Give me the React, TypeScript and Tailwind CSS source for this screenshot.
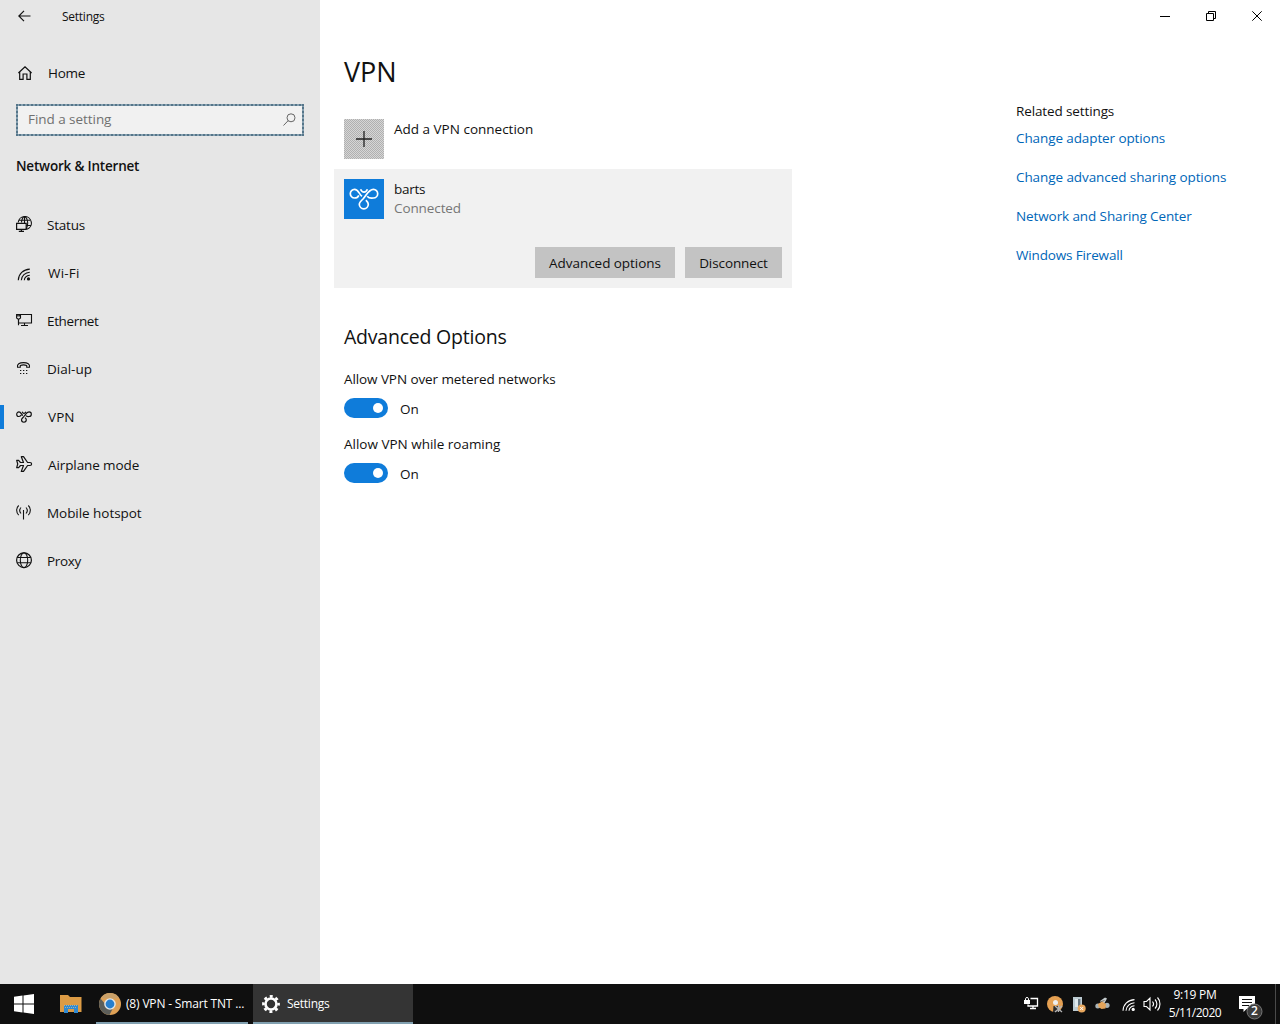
import React from "react";

type IconProps = { children: React.ReactNode; w?: number; h?: number; className?: string };

function Icon({ children, w = 18, h = 18, className = "" }: IconProps) {
  return (
    <svg
      width={w}
      height={h}
      viewBox={`0 0 ${w} ${h}`}
      fill="none"
      stroke="currentColor"
      strokeWidth="1"
      className={`block shrink-0 ${className}`}
    >
      {children}
    </svg>
  );
}

const StatusIcon = () => (
  <Icon>
    <path d="M2.200 6.500A6.600 6.600 0 1 1 11 13.300M3.200 4.300h10.800M10.300 9.500h4.500M5.500 6.500C5.500 3.500 7 .7 8.500 .7s3.200 2.700 3.200 6.200c0 2.300-.4 4.300-1.500 6.200M8.500 .7v6.500" strokeWidth="1.100" />
    <path d="M.6 7.300h9.600v6H.6zM5.400 13v2.400M2.800 15.400h5.200" strokeWidth="1.200" />
  </Icon>
);

const WifiArcs = () => (
  <>
    <path d="M1 12.700C1.200 6.500 6 1.900 12.500 1.600M4 12.700C4.200 8.300 8 5 12.500 4.700M7 12.800c.2-2.800 2.500-4.800 5.500-5.100" strokeWidth="1.100" />
    <circle cx="11.200" cy="11.400" r="1.600" fill="currentColor" stroke="none" />
  </>
);

const WifiIcon = () => (
  <Icon>
    <g transform="translate(1.300 3.500)">
      <WifiArcs />
    </g>
  </Icon>
);

const EthernetIcon = () => (
  <Icon>
    <path d="M4.500 2.500h11v8.500H2.500V7.500M5 13.500h7M8.500 11v2.500" strokeWidth="1.100" />
    <path d="M.6 2.500h3.900v3.500L3.300 7H1.800L.6 6zM1.900 2.500v2M3.300 2.500v2M2.500 7v6.300" strokeWidth="1.100" />
  </Icon>
);

const DialIcon = () => (
  <Icon>
    <path d="M1.500 7.200c-.7-3 2-4.600 6-4.600s6.700 1.600 6 4.600h-2.800V5.500C9 4.800 6 4.800 4.300 5.500v1.700z" strokeWidth="1.100" />
    <path d="M4 10.500h1.300M7 10.500h1.300M10 10.500h1.300M4 13.500h1.300M7 13.500h1.300M10 13.500h1.300" strokeWidth="1.200" />
  </Icon>
);

/* Two side loops and a lower loop joined by crossing strands. */
function VpnLoops({ width, height, sw }: { width: number; height: number; sw: number }) {
  return (
    <svg width={width} height={height} viewBox="0 0 30 22" fill="none" stroke="currentColor" strokeWidth={sw} className="block shrink-0">
      <path d="M9.800 7.300C9 9 7.300 10 5.600 10A4.300 4.300 0 1 1 5.600 1.400C9.300 1.400 10.200 6.400 13 8.300" />
      <path d="M11.600 1.200C12.500 3.500 14 4.100 15 4.100s2.500-.6 3.400-2.900" />
      <path d="M18.200 8.200C20 10.500 22.500 10.300 24.400 10a4.300 4.300 0 1 0 0-8.600C19.500 1.400 17.400 7.500 14 11c-3 2.800-3.700 4-3.700 5.300a4.500 4.500 0 0 0 9 0c0-1.700-1-2.900-2.400-4.200" />
    </svg>
  );
}

const PlaneIcon = () => (
  <Icon>
    <path d="M.7 4.300h1.900l1.900 2.200h3L5.300 .7h2.200l4.100 5.800h2.400c2.100 0 2.100 3 0 3h-2.400L7.500 15.400H5.300l2.200-5.900h-3l-1.900 2.200H.7l1-3.700z" strokeWidth="1.200" strokeLinejoin="round" />
  </Icon>
);

const HotspotIcon = () => (
  <Icon>
    <path d="M7.500 6v9.500M5 3.500c-1.500 1.700-1.500 4.300 0 6M10 3.500c1.500 1.700 1.500 4.300 0 6M2.700 1.500C0 4 0 8.700 2.700 11.200M12.300 1.500c2.700 2.500 2.700 7.200 0 9.700" strokeWidth="1.100" />
  </Icon>
);

const GlobeIcon = () => (
  <Icon>
    <circle cx="8" cy="8.200" r="7.400" strokeWidth="1.200" />
    <ellipse cx="8" cy="8.200" rx="3.700" ry="7.400" strokeWidth="1.100" />
    <path d="M1.200 5.500h13.600M1.200 10.800h13.600" strokeWidth="1.100" />
  </Icon>
);

const NAV = [
  { label: "Status", icon: <StatusIcon />, cls: "tracking-[-0.2px]" },
  { label: "Wi-Fi", icon: <WifiIcon />, cls: "ml-px tracking-[0.2px]" },
  { label: "Ethernet", icon: <EthernetIcon />, cls: "tracking-[-0.35px]" },
  { label: "Dial-up", icon: <DialIcon />, cls: "" },
  { label: "VPN", icon: <VpnLoops width={16} height={12} sw={2.2} />, cls: "ml-px tracking-[0.1px]", active: true },
  { label: "Airplane mode", icon: <PlaneIcon />, cls: "ml-px tracking-[-0.1px]" },
  { label: "Mobile hotspot", icon: <HotspotIcon />, cls: "tracking-[-0.05px]" },
  { label: "Proxy", icon: <GlobeIcon />, cls: "tracking-[-0.35px]" },
];

const LINKS = [
  { label: "Change adapter options", cls: "tracking-[-0.1px]" },
  { label: "Change advanced sharing options", cls: "tracking-[-0.08px]" },
  { label: "Network and Sharing Center", cls: "tracking-[-0.1px]" },
  { label: "Windows Firewall", cls: "tracking-[-0.15px]" },
];

function Sidebar() {
  return (
    <aside className="flex w-80 shrink-0 flex-col bg-[#e6e6e6]">
      <div className="flex h-8 items-center pl-[18px]">
        <Icon w={13} h={12}>
          <path d="M.8 6H12.500M6 .8L.8 6 6 11.200" strokeWidth="1.200" />
        </Icon>
        <span className="ml-[31px] pt-[2px] text-[12px] leading-4 tracking-[-0.25px]">Settings</span>
      </div>
      <div className="mt-[17px] flex h-12 items-center pl-[18px]">
        <Icon w={14} h={14}>
          <path d="M.4 7L7 .8 13.600 7M1.700 6v7.300h3.400V8h3.800v5.300h3.400V6" strokeWidth="1.200" />
        </Icon>
        <span className="ml-4 tracking-[-0.25px]">Home</span>
      </div>
      <div className="mx-4 mt-[7px] flex h-8 border-2 border-dotted border-[#557589] bg-[#86a0b0]">
        <div className="flex flex-1 items-center justify-between bg-[#f1f1f1] pr-[6px] pl-[10px]">
          <span className="pb-[2px] tracking-[-0.05px] text-[#707070]">Find a setting</span>
          <Icon w={13} h={13} className="mb-px text-[#666]">
            <circle cx="8" cy="4.800" r="4" />
            <path d="M5.200 7.600L.5 12.500" />
          </Icon>
        </div>
      </div>
      <div className="mt-5 pl-4 leading-5 font-semibold tracking-[-0.2px]">Network &amp; Internet</div>
      <nav className="mt-[25px] flex flex-col">
        {NAV.map((n) => (
          <div key={n.label} className="flex h-12 items-center">
            <div className={`h-6 w-1 ${n.active ? "bg-[#0f7cda]" : ""}`} />
            <div className="ml-3 w-[31px]">{n.icon}</div>
            <span className={n.cls}>{n.label}</span>
          </div>
        ))}
      </nav>
    </aside>
  );
}

function Toggle({ label, cls }: { label: string; cls: string }) {
  return (
    <div className="flex h-[65px] flex-col">
      <span className={`leading-5 ${cls}`}>{label}</span>
      <div className="mt-[9px] flex h-5 items-center">
        <div className="flex h-5 w-11 items-center justify-end rounded-full bg-[#0f7cda] pr-[5px]">
          <div className="size-[10px] rounded-full bg-white" />
        </div>
        <span className="ml-3 pt-[2px]">On</span>
      </div>
    </div>
  );
}

function Content() {
  return (
    <main className="w-[472px] pt-5">
      <h1 className="pl-[10px] text-[27px] leading-10 font-normal">VPN</h1>
      <div className="mt-[27px] flex h-[50px] pl-[10px]">
        <div className="flex size-10 items-center justify-center bg-[repeating-conic-gradient(#b0b0b0_0_25%,#d6d6d6_0_50%)] bg-[length:2px_2px]">
          <Icon w={16} h={16} className="text-[#222]">
            <path d="M8 0v16M0 8h16" strokeWidth="1.300" />
          </Icon>
        </div>
        <span className="ml-[10px] leading-5">Add a VPN connection</span>
      </div>
      <section className="flex h-[119px] w-[458px] flex-col bg-[#f1f1f1] p-[10px]">
        <div className="flex">
          <div className="flex size-10 items-center justify-center bg-[#0f7cda] text-white">
            <VpnLoops width={30} height={22} sw={1.7} />
          </div>
          <div className="ml-[10px] flex flex-col">
            <span className="leading-5 tracking-[-0.25px]">barts</span>
            <span className="leading-[19px] tracking-[-0.1px] text-[#767676]">Connected</span>
          </div>
        </div>
        <div className="mt-7 flex justify-end gap-[10px]">
          <button className="h-[31px] w-[140px] bg-[#c3c3c3] tracking-[-0.05px]">Advanced options</button>
          <button className="h-[31px] w-[97px] bg-[#c3c3c3] tracking-[-0.1px]">Disconnect</button>
        </div>
      </section>
      <div className="pl-[10px]">
        <h2 className="mt-[35px] text-[19.500px] leading-7 font-normal tracking-[-0.22px]">Advanced Options</h2>
        <div className="mt-[18px]">
          <Toggle label="Allow VPN over metered networks" cls="tracking-[-0.09px]" />
          <Toggle label="Allow VPN while roaming" cls="tracking-[-0.01px]" />
        </div>
      </div>
    </main>
  );
}

function CaptionButtons() {
  return (
    <div className="flex h-8 items-center justify-end text-black">
      <div className="flex w-[46px] justify-center">
        <Icon w={10} h={10}>
          <path d="M0 5.500h10" />
        </Icon>
      </div>
      <div className="flex w-[46px] justify-center">
        <Icon w={10} h={10}>
          <path d="M.5 2.500h7v7h-7zM2.500 2.500v-2h7v7h-2" />
        </Icon>
      </div>
      <div className="flex w-[46px] justify-center">
        <Icon w={10} h={10}>
          <path d="M.3 .3l9.400 9.400M9.700 .3l-9.400 9.400" />
        </Icon>
      </div>
    </div>
  );
}

function Taskbar() {
  return (
    <footer className="flex h-10 items-stretch bg-[#0f0f0f] text-[12px] text-white">
      <div className="flex w-12 items-center justify-center">
        <svg width="20" height="20" viewBox="0 0 20 20" fill="#fff">
          <path d="M0 2.800L8.500 1.600V9.500H0zM9.500 1.400L20 0v9.500H9.500zM0 10.500h8.500v8L0 17.300zM9.500 10.500H20V20L9.500 18.600z" />
        </svg>
      </div>
      <div className="flex w-12 items-center pl-3">
        <svg width="22" height="20" viewBox="0 0 22 20">
          <path d="M0 1h8l2 2h11.500v15H0z" fill="#dc9b45" />
          <path d="M4 11h14v8h-4v-4H8v4H4z" fill="#328ad0" />
          <path d="M4 11.500h14M5 13.500h12" stroke="#9cb3b5" strokeDasharray="1 1" />
        </svg>
      </div>
      <div className="flex w-[152px] items-center border-b-2 border-[#81a0b0] pl-[3px]">
        <svg width="22" height="22" viewBox="0 0 22 22" className="mt-px shrink-0">
          <circle cx="11" cy="11" r="11" fill="#dfa055" />
          <path d="M1.500 5.500A11 11 0 0 0 10.500 22L14.500 14 7 12z" fill="#5c5e5a" />
          <path d="M1.800 5A11 11 0 0 1 20 4.800L12 6z" fill="#c9a069" />
          <circle cx="11" cy="11" r="5.800" fill="#e4e8ea" />
          <circle cx="11" cy="11" r="4.400" fill="#287fcd" />
        </svg>
        <span className="ml-[5px] pt-px tracking-[-0.17px] whitespace-nowrap">(8) VPN - Smart TNT ...</span>
      </div>
      <div className="ml-[5px] flex w-40 items-center border-b-2 border-[#81a0b0] bg-[#343434] pl-[9px]">
        <svg width="18" height="18" viewBox="-9 -9 18 18" fill="none" stroke="#fff" className="mt-px">
          <circle r="5.500" strokeWidth="2.600" />
          <circle r="7.600" strokeWidth="2.600" strokeDasharray="3 2.969" strokeDashoffset="1.500" />
        </svg>
        <span className="ml-[7px] pt-px tracking-[-0.25px]">Settings</span>
      </div>
      <div className="flex-1" />
      <div className="flex items-center">
        <Icon w={15} h={16} className="mr-2">
          <path d="M6.500 2.500h7v7.500H4V8.500M6 12.500h6M9 10v2.500" strokeWidth="1.300" />
          <path d="M0 4h6v4H0z" fill="#fff" stroke="none" />
          <path d="M1.500 4.500V2.800C1.500 1 4.500 1 4.500 2.800V4" />
        </Icon>
        <svg width="17" height="17" viewBox="0 0 17 17" className="mr-2">
          <circle cx="8" cy="8" r="8" fill="#e5a052" />
          <circle cx="8.500" cy="6.500" r="2.500" fill="#eee" />
          <path d="M6 16l.5-6h4.500l1 6z" fill="#2b2b2b" />
          <path d="M8 10l7 6M15 10l-7 6M11.500 9v7" stroke="#b4b4b4" strokeWidth="1.300" />
        </svg>
        <svg width="14" height="17" viewBox="0 0 14 17" className="mr-[9px]">
          <path d="M1 1h9v14H1z" fill="#bccbd2" />
          <path d="M3 3h5.500v8H3z" fill="#dfe8ec" />
          <path d="M6 3h2.500v8H6z" fill="#667681" />
          <circle cx="9.700" cy="12.500" r="4" fill="#e8a75e" />
          <path d="M8.200 11l3 3m0-3l-3 3" stroke="#fff" />
        </svg>
        <svg width="15" height="14" viewBox="0 0 15 14" className="mr-3">
          <path d="M5 4L10 .5l2 1-2.500 4.500-3 0z" fill="#c5ccce" />
          <circle cx="2.800" cy="9" r="2.500" fill="#a9b3b7" />
          <circle cx="12" cy="8.300" r="2.600" fill="#a9b3b7" />
          <path d="M3 7l4-2.500 4 2.500-.5 4.500-4 .5L3.500 10z" fill="#e3a45b" />
          <path d="M5.500 4.800l4-1.300" stroke="#6a5a45" strokeWidth=".8" />
        </svg>
        <Icon w={14} h={14} className="mt-px mr-[7px]">
          <WifiArcs />
        </Icon>
        <Icon w={18} h={16}>
          <path d="M1 5.500h2.500L7 2v12l-3.500-3.500H1zM9.500 5.500c1.300 1.500 1.300 3.500 0 5M12 3.500c2.500 2.500 2.500 6.500 0 9M14.500 1.500c3.300 3.500 3.300 9.500 0 13" strokeWidth="1.100" />
        </Icon>
        <div className="ml-[7px] flex w-[54px] flex-col items-center leading-[18px]">
          <span className="tracking-[-0.25px]">9:19 PM</span>
          <span className="tracking-[-0.5px]">5/11/2020</span>
        </div>
        <div className="relative ml-[17px] h-10 w-[37px] border-r border-[#4a4a4a]">
          <svg width="26" height="28" viewBox="0 0 26 28" className="mt-[10px]">
            <path d="M0 2h16v13H7.500L4.500 18v-3H0z" fill="#fff" />
            <path d="M3 5.500h10M3 8.500h10M3 11.500h7" stroke="#111" />
            <circle cx="15.500" cy="17.500" r="7.500" fill="#3c3c3c" stroke="#777" />
          </svg>
          <span className="absolute top-[19px] left-[12px] text-[12px] leading-4 font-semibold">2</span>
        </div>
        <div className="w-1" />
      </div>
    </footer>
  );
}

export default function App() {
  return (
    <div className="flex h-[1024px] w-[1280px] flex-col overflow-hidden bg-white font-['Open_Sans',sans-serif] text-[13.500px] leading-5 text-[#111]">
      <div className="flex flex-1">
        <Sidebar />
        <div className="flex flex-1 flex-col pl-[14px]">
          <CaptionButtons />
          <div className="flex justify-between">
            <Content />
            <div className="flex w-[264px] flex-col pt-[69px]">
              <span className="tracking-[-0.12px]">Related settings</span>
              <div className="mt-[7px] flex flex-col gap-[19px]">
                {LINKS.map((l) => (
                  <a key={l.label} className={`text-[#0066b8] ${l.cls}`}>
                    {l.label}
                  </a>
                ))}
              </div>
            </div>
          </div>
        </div>
      </div>
      <Taskbar />
    </div>
  );
}
